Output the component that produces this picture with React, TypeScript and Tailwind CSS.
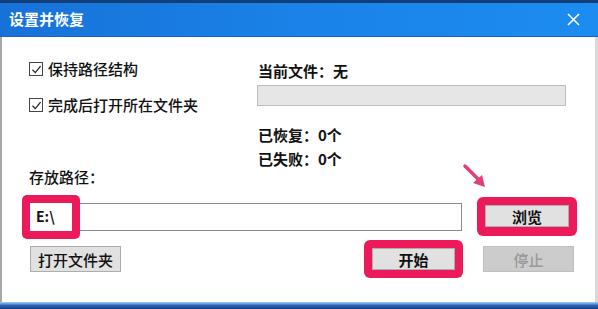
import React from 'react';

const PINK = 'bg-[#ec1a5a]';

function Check() {
  return (
    <span className="w-[14px] h-[14px] border border-[#444] bg-white flex items-center justify-center shrink-0">
      <svg width="11" height="11" viewBox="0 0 11 11">
        <path d="M1.5 5.8 L4.3 8.6 L9.6 2.2" fill="none" stroke="#222" strokeWidth="1.3" />
      </svg>
    </span>
  );
}

export default function App() {
  return (
    <div className="w-[598px] h-[309px] flex flex-col bg-white text-[#111] font-['Noto_Sans_CJK_SC','Microsoft_YaHei',sans-serif] overflow-hidden">
      {/* Title bar */}
      <div className="h-[37px] shrink-0 border-t-[3px] border-[#123f7a] border-b border-b-[#1565c0] bg-gradient-to-r from-[#1772d8] via-[#1a82e8] to-[#1c8cf0] flex items-center justify-between pl-[9px] pr-[18px]">
        <span className="text-white text-[15px] font-bold">设置并恢复</span>
        <svg width="13" height="13" viewBox="0 0 13 13">
          <path d="M1 1 L12 12 M12 1 L1 12" stroke="#fff" strokeWidth="1.6" />
        </svg>
      </div>

      {/* Body */}
      <div className="relative flex-1 border-l-2 border-l-[#a8a8a8] border-r-[3px] border-r-[#d8d8d8] pl-[27px] text-[15px]">
        <div className="flex">
          <div className="w-[229px] flex flex-col">
            <label className="mt-[22px] h-[20px] flex items-center gap-[5px] font-medium">
              <Check />
              保持路径结构
            </label>
            <label className="mt-[16px] h-[20px] flex items-center gap-[5px] font-medium">
              <Check />
              完成后打开所在文件夹
            </label>
            <div className="mt-[52px] h-[20px] leading-[20px] font-medium">存放路径：</div>
          </div>
          <div className="w-[309px] flex flex-col font-bold">
            <div className="mt-[24px] h-[20px] leading-[20px]">当前文件：无</div>
            <div className="mt-[4px] h-[21px] w-[309px] -ml-[1px] bg-[#e6e6e6] border border-[#bcbcbc]" />
            <div className="mt-[19px] h-[20px] leading-[20px]">已恢复：0个</div>
            <div className="mt-[4px] h-[20px] leading-[20px]">已失败：0个</div>
          </div>
        </div>

        {/* Path row */}
        <div className="mt-[10px] flex items-center">
          <div className="relative ml-[1px] w-[432px] h-[28px] border border-[#8a8a8a] bg-white">
            <div className={`absolute -left-[9px] -top-[9px] w-[58px] h-[44px] rounded-[5px] ${PINK} p-[8px]`}>
              <div className="w-full h-full bg-white flex items-center pl-[6px] text-[14px] font-bold">E:\</div>
            </div>
          </div>
          <div className={`ml-[15px] w-[100px] h-[39px] rounded-[6px] ${PINK} p-[8px] pb-[9px]`}>
            <button className="w-full h-full bg-[#e1e1e1] border border-[#adadad] text-[15px] font-bold leading-none">浏览</button>
          </div>
        </div>

        {/* Buttons row */}
        <div className="mt-[4px] flex items-center">
          <button className="ml-[1px] w-[91px] h-[26px] bg-[#e1e1e1] border border-[#adadad] text-[15px] font-medium leading-none">打开文件夹</button>
          <div className={`ml-[243px] w-[99px] h-[38px] rounded-[6px] ${PINK} p-[8px]`}>
            <button className="w-full h-full bg-[#e1e1e1] border border-[#adadad] text-[15px] font-bold leading-none">开始</button>
          </div>
          <button className="ml-[20px] w-[91px] h-[26px] bg-[#cccccc] border border-[#bfbfbf] text-[#9a9a9a] text-[15px] font-medium leading-none">停止</button>
        </div>

        {/* Annotation arrow */}
        <svg className="absolute left-[459px] top-[126px]" width="30" height="28" viewBox="0 0 30 28">
          <path d="M4 3 L19 18" stroke="#e0407a" strokeWidth="3.5" strokeLinecap="round" />
          <path d="M12 20 L24 24 L21 12 Z" fill="#e0407a" />
        </svg>
      </div>

      {/* Bottom strip */}
      <div className="h-[7px] shrink-0 bg-gradient-to-b from-[#9fd3f5] via-[#2b66b8] to-[#183f86]" />
    </div>
  );
}
